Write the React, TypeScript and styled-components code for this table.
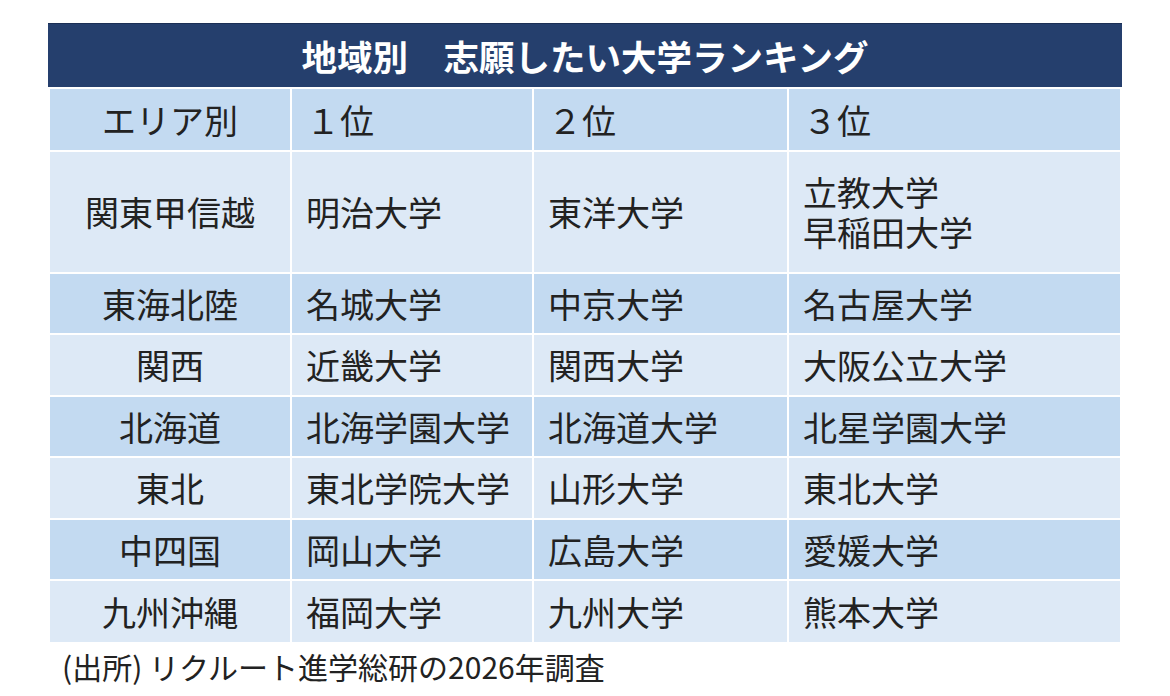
import React from "react";
import styled, { createGlobalStyle } from "styled-components";

const GlobalStyle = createGlobalStyle`
  html, body {
    margin: 0;
    padding: 0;
    background: #ffffff;
  }
  body {
    font-family: "Noto Sans CJK JP", "Noto Sans", sans-serif;
    color: #222222;
  }
`;

const Page = styled.div`
  width: 1170px;
  height: 696px;
  padding: 23px 0 0 48px;
  box-sizing: border-box;
  overflow: hidden;
`;

const Panel = styled.div`
  width: 1074px;
  display: flex;
  flex-direction: column;
`;

const Title = styled.div`
  height: 64px;
  background: #253f6d;
  border-top: 1px solid #1b2f55;
  box-sizing: border-box;
  display: flex;
  align-items: center;
  justify-content: center;
  color: #ffffff;
  font-size: 35.5px;
  font-weight: 700;
`;

const Grid = styled.div`
  margin: 2px 2px 0 2px;
  display: grid;
  grid-template-columns: 240px 240px 253px 331px;
  grid-template-rows: 61px 120px 59px 60px 59px 60px 59px 61px;
  gap: 2px;
  background: #ffffff;
`;

const Cell = styled.div<{ $shade: boolean; $center?: boolean }>`
  background: ${(p) => (p.$shade ? "#c3daf1" : "#dde9f6")};
  display: flex;
  flex-direction: column;
  justify-content: center;
  align-items: ${(p) => (p.$center ? "center" : "flex-start")};
  padding: 0 ${(p) => (p.$center ? "0" : "14px")};
  font-size: 34px;
  line-height: 40px;
  color: #222222;
  white-space: nowrap;
`;

const Footnote = styled.div`
  margin: 6px 0 0 14px;
  font-size: 30px;
  line-height: 36px;
  color: #222222;
  white-space: nowrap;
`;

type Row = { area: string; first: string[]; second: string[]; third: string[] };

const rows: Row[] = [
  { area: "関東甲信越", first: ["明治大学"], second: ["東洋大学"], third: ["立教大学", "早稲田大学"] },
  { area: "東海北陸", first: ["名城大学"], second: ["中京大学"], third: ["名古屋大学"] },
  { area: "関西", first: ["近畿大学"], second: ["関西大学"], third: ["大阪公立大学"] },
  { area: "北海道", first: ["北海学園大学"], second: ["北海道大学"], third: ["北星学園大学"] },
  { area: "東北", first: ["東北学院大学"], second: ["山形大学"], third: ["東北大学"] },
  { area: "中四国", first: ["岡山大学"], second: ["広島大学"], third: ["愛媛大学"] },
  { area: "九州沖縄", first: ["福岡大学"], second: ["九州大学"], third: ["熊本大学"] },
];

const Lines = ({ items }: { items: string[] }) => (
  <>
    {items.map((t) => (
      <span key={t}>{t}</span>
    ))}
  </>
);

export default function App() {
  return (
    <>
      <GlobalStyle />
      <Page>
        <Panel>
          <Title>地域別　志願したい大学ランキング</Title>
          <Grid>
            <Cell $shade $center>エリア別</Cell>
            <Cell $shade>１位</Cell>
            <Cell $shade>２位</Cell>
            <Cell $shade>３位</Cell>
            {rows.map((r, i) => {
              const shade = i % 2 === 1;
              return (
                <React.Fragment key={r.area}>
                  <Cell $shade={shade} $center>{r.area}</Cell>
                  <Cell $shade={shade}><Lines items={r.first} /></Cell>
                  <Cell $shade={shade}><Lines items={r.second} /></Cell>
                  <Cell $shade={shade}><Lines items={r.third} /></Cell>
                </React.Fragment>
              );
            })}
          </Grid>
          <Footnote>(出所) リクルート進学総研の2026年調査</Footnote>
        </Panel>
      </Page>
    </>
  );
}
